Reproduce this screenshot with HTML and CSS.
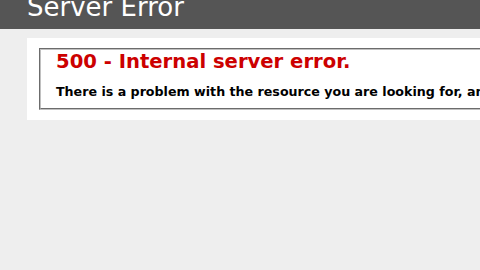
FILE: index.html
```html
<!DOCTYPE html>
<html>
<head>
<meta charset="utf-8">
<title>500 - Internal server error.</title>
<link rel="stylesheet" href="styles.css">
</head>
<body>
<div class="header"><h1 class="title">Server Error</h1></div>
<div class="content">
  <div class="content-container">
    <fieldset class="box">
      <h2 class="err">500 - Internal server error.</h2>
      <h3 class="msg">There is a problem with the resource you are looking for, and it cannot be displayed.</h3>
    </fieldset>
  </div>
</div>
</body>
</html>
```

FILE: styles.css
```css
html, body {
  margin: 0;
  overflow: hidden;
}
body {
  font-size: 11.2px;
  font-family: "DejaVu Sans", Verdana, sans-serif;
  background: #eeeeee;
  width: 480px;
  height: 270px;
}
.header {
  height: 29px;
  padding-left: 27px;
  background-color: #555555;
  color: #fff;
  overflow: hidden;
}
.title {
  margin: -6px 0 0 0;
  font-family: "DejaVu Sans", sans-serif;
  font-weight: normal;
  font-size: 26px;
  line-height: 26px;
  color: #fff;
  white-space: nowrap;
}
.content {
  margin: 9px 0 0 27px;
  width: 1400px;
}
.content-container {
  background: #fff;
  width: 1200px;
  padding: 10px;
}
.box {
  margin: 0 2px;
  padding: 0 15px 9px 15px;
  border: 2px groove #c0c0c0;
}
.err {
  font-size: 19.6px;
  margin: 0;
  color: #cc0000;
  white-space: nowrap;
}
.msg {
  font-size: 12.65px;
  line-height: 14px;
  margin: 12px 0 0 0;
  color: #000;
  white-space: nowrap;
}
```
